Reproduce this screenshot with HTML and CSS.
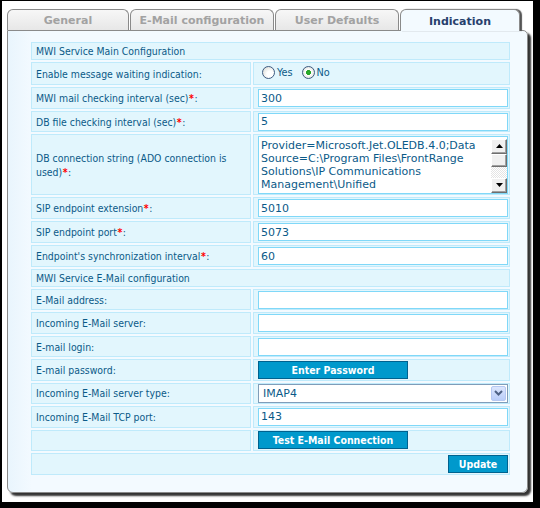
FILE: index.html
```html
<!DOCTYPE html>
<html>
<head>
<meta charset="utf-8">
<link rel="stylesheet" href="styles.css">
</head>
<body>
<div class="window">
  <div class="tabs">
    <div class="tab t1">General</div>
    <div class="tab t2">E-Mail configuration</div>
    <div class="tab t3">User Defaults</div>
    <div class="tab t4 active">Indication</div>
  </div>
  <div class="panel">
    <table class="cfg">
      <tr class="sect"><td colspan="2">MWI Service Main Configuration</td></tr>
      <tr class="radio-row">
        <td class="lbl">Enable message waiting indication:</td>
        <td class="val">
          <label class="radio"><input type="radio" name="mwi"><span>Yes</span></label>
          <label class="radio"><input type="radio" name="mwi" checked><span>No</span></label>
        </td>
      </tr>
      <tr>
        <td class="lbl">MWI mail checking interval (sec)<b class="req">*</b>:</td>
        <td class="val"><input class="text" type="text" value="300"></td>
      </tr>
      <tr class="short">
        <td class="lbl">DB file checking interval (sec)<b class="req">*</b>:</td>
        <td class="val"><input class="text" type="text" value="5"></td>
      </tr>
      <tr class="area-row">
        <td class="lbl">DB connection string (ADO connection is<br>used)<b class="req">*</b>:</td>
        <td class="val">
          <div class="area">
            <textarea class="area-text">Provider=Microsoft.Jet.OLEDB.4.0;Data Source=C:\Program Files\FrontRange Solutions\IP Communications Management\Unified</textarea>
            <div class="sbar">
              <div class="sbtn"><svg width="7" height="4" viewBox="0 0 7 4"><path d="M3.5 0L7 4H0z" fill="#000"/></svg></div>
              <div class="sthumb"></div>
              <div class="strack"></div>
              <div class="sbtn"><svg width="7" height="4" viewBox="0 0 7 4"><path d="M0 0H7L3.5 4z" fill="#000"/></svg></div>
            </div>
          </div>
        </td>
      </tr>
      <tr>
        <td class="lbl">SIP endpoint extension<b class="req">*</b>:</td>
        <td class="val"><input class="text" type="text" value="5010"></td>
      </tr>
      <tr>
        <td class="lbl">SIP endpoint port<b class="req">*</b>:</td>
        <td class="val"><input class="text" type="text" value="5073"></td>
      </tr>
      <tr>
        <td class="lbl">Endpoint's synchronization interval<b class="req">*</b>:</td>
        <td class="val"><input class="text" type="text" value="60"></td>
      </tr>
      <tr class="sect"><td colspan="2">MWI Service E-Mail configuration</td></tr>
      <tr class="em">
        <td class="lbl">E-Mail address:</td>
        <td class="val"><input class="text" type="text" value=""></td>
      </tr>
      <tr class="em">
        <td class="lbl">Incoming E-Mail server:</td>
        <td class="val"><input class="text" type="text" value=""></td>
      </tr>
      <tr class="em">
        <td class="lbl">E-mail login:</td>
        <td class="val"><input class="text" type="text" value=""></td>
      </tr>
      <tr class="em">
        <td class="lbl">E-mail password:</td>
        <td class="val"><button class="btn wide" type="button">Enter Password</button></td>
      </tr>
      <tr class="em">
        <td class="lbl">Incoming E-Mail server type:</td>
        <td class="val">
          <div class="select">
            <span class="select-text">IMAP4</span>
            <span class="select-btn"><svg width="9" height="6" viewBox="0 0 9 6"><path d="M1 1L4.5 4.5L8 1" fill="none" stroke="#4d6185" stroke-width="2"/></svg></span>
          </div>
        </td>
      </tr>
      <tr class="em">
        <td class="lbl">Incoming E-Mail TCP port:</td>
        <td class="val"><input class="text" type="text" value="143"></td>
      </tr>
      <tr class="em">
        <td class="lbl"></td>
        <td class="val"><button class="btn wide" type="button">Test E-Mail Connection</button></td>
      </tr>
      <tr class="foot">
        <td colspan="2"><button class="btn small" type="button">Update</button></td>
      </tr>
    </table>
  </div>
</div>
</body>
</html>
```
FILE: styles.css
```css
html, body {
  margin: 0;
  padding: 0;
  background: #000;
}
body {
  width: 540px;
  height: 508px;
  overflow: hidden;
}
.window {
  box-sizing: border-box;
  width: 531px;
  height: 501px;
  margin: 1px 0 0 2px;
  padding: 8px 0 0 5px;
  background: #fff;
}
.tabs {
  display: flex;
  align-items: flex-end;
  gap: 1px;
  height: 21px;
}
.tab {
  box-sizing: border-box;
  height: 21px;
  padding-top: 1px;
  border: 1px solid #8a8a8a;
  border-bottom: none;
  border-radius: 6px 6px 0 0;
  background: linear-gradient(#f7f7f7, #e7e7e7);
  font: bold 11px "DejaVu Sans", sans-serif;
  color: #a2a2a2;
  text-align: center;
  line-height: 20px;
}
.t1 { width: 122px; }
.t2 { width: 144px; }
.t3 { width: 124px; }
.t4 { width: 120px; }
.tab.active {
  position: relative;
  z-index: 1;
  height: 22px;
  margin-bottom: -1px;
  background: #f3faff;
  color: #26406c;
  box-shadow: 2px 0 1px #555;
  line-height: 22px;
}
.panel {
  box-sizing: border-box;
  width: 521px;
  height: 463px;
  border: 1px solid #8a8a8a;
  border-radius: 0 5px 6px 6px;
  background: linear-gradient(90deg, #e9f5fd, #f3faff 24px);
  box-shadow: 3px 3px 2px #333;
  padding: 9px 0 0 21px;
}
.cfg {
  border-collapse: separate;
  border-spacing: 2px;
  font: 10.4px/14px "DejaVu Sans Condensed", sans-serif;
  color: #0b5a88;
}
.cfg td {
  box-sizing: border-box;
  height: 22px;
  padding: 0 0 0 4px;
  border: 1px solid #bfeafb;
  background: #e2f6fd;
  vertical-align: middle;
}
.cfg td.lbl { width: 220px; }
.cfg td.val { width: 257px; }
.cfg tr.sect td { height: 18px; }
.cfg tr.radio-row td { height: 23px; }
.cfg tr.short td { height: 21px; }
.cfg tr.area-row td { height: 61px; }
.cfg tr.em td { height: 21.43px; }
.cfg tr.foot td { height: 22px; text-align: right; padding-right: 1px; }
.req {
  color: #f00;
  font-weight: bold;
  margin: 0 0.5px;
}
.text {
  box-sizing: border-box;
  display: block;
  width: 250px;
  height: 18px;
  margin: 0;
  padding: 0 2px;
  border: 1px solid #80d8f8;
  background: #fff;
  font: 11px "DejaVu Sans", sans-serif;
  color: #0b5a88;
  outline: none;
}
.radio {
  display: inline-flex;
  align-items: center;
  margin-left: 4px;
  margin-right: 2px;
  font: 10.8px "DejaVu Sans Condensed", sans-serif;
  color: #0b5a88;
}
.radio input {
  appearance: none;
  -webkit-appearance: none;
  box-sizing: border-box;
  width: 13px;
  height: 13px;
  margin: 0 2px 0 0;
  border: 1px solid #3d5a80;
  border-radius: 50%;
  background: radial-gradient(circle at 65% 65%, #fff 0, #fff 30%, #d4d4cc 100%);
}
.radio input:checked {
  background: radial-gradient(circle, #2fb02f 0, #21a121 2.2px, #fff 2.6px, #fff 35%, #d4d4cc 100%);
}
.area {
  box-sizing: border-box;
  display: flex;
  width: 250px;
  height: 58px;
  border: 1px solid #80d8f8;
  background: #fff;
}
.area-text {
  flex: 1;
  margin: 0;
  padding: 2px 0 0 2px;
  border: none;
  resize: none;
  overflow: hidden;
  font: 11px/13px "DejaVu Sans", sans-serif;
  color: #0b5a88;
  outline: none;
}
.sbar {
  display: flex;
  flex-direction: column;
  width: 16px;
  margin: 2px 0 0 0;
}
.sbtn, .sthumb {
  box-sizing: border-box;
  display: flex;
  align-items: center;
  justify-content: center;
  background: #f0f0f0;
  border: 1px solid;
  border-color: #fff #6e6e6e #6e6e6e #fff;
  box-shadow: inset -1px -1px 0 #a0a0a0;
}
.sbtn { height: 15px; }
.sthumb { height: 13px; }
.strack {
  flex: 1;
  background: repeating-conic-gradient(#fff 0 25%, #e4e4e4 0 50%) 0 0 / 2px 2px;
}
.select {
  box-sizing: border-box;
  display: flex;
  align-items: center;
  width: 250px;
  height: 19px;
  border: 1px solid #7f9db9;
  background: #fff;
  padding: 0 1px 0 4px;
}
.select-text {
  flex: 1;
  font: 11px "DejaVu Sans", sans-serif;
  color: #0b5a88;
}
.select-btn {
  box-sizing: border-box;
  display: flex;
  align-items: center;
  justify-content: center;
  width: 15px;
  height: 15px;
  border: 1px solid #b5c8f2;
  border-radius: 2px;
  background: linear-gradient(#dce6fd, #b9cdf9);
}
.btn {
  box-sizing: border-box;
  height: 18px;
  margin: 0;
  padding: 0;
  border: 1px solid #00628f;
  background: #0099cc;
  color: #fff;
  font: bold 10.5px "DejaVu Sans Condensed", sans-serif;
  vertical-align: middle;
}
.btn.wide { width: 150px; }
.btn.small { width: 60px; }
```
